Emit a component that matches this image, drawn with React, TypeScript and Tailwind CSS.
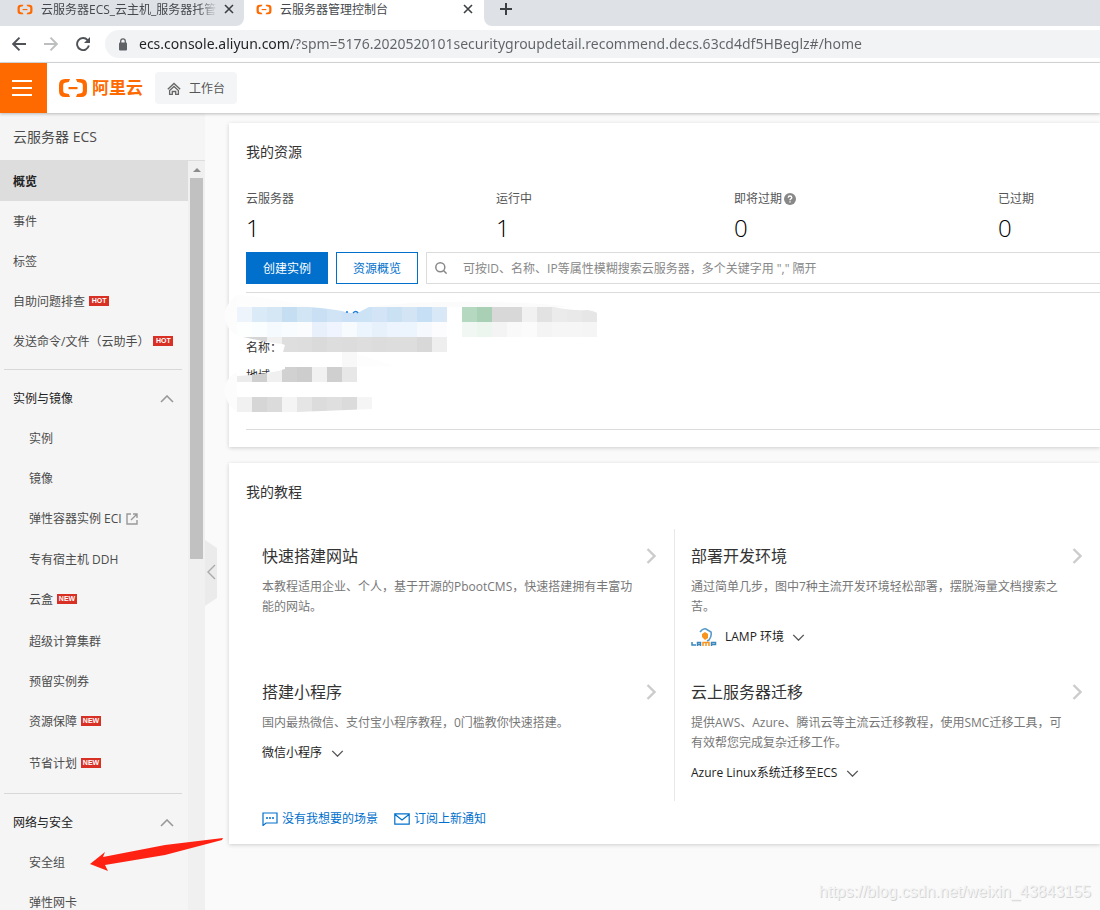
import type { ReactNode } from 'react';
import clsx from 'clsx';

interface NavItem {
  label: string;
  badge?: 'HOT' | 'NEW';
  external?: boolean;
  active?: boolean;
}

const TOP_ITEMS: NavItem[] = [
  { label: '概览', active: true },
  { label: '事件' },
  { label: '标签' },
  { label: '自助问题排查', badge: 'HOT' },
  { label: '发送命令/文件（云助手）', badge: 'HOT' },
];

const INSTANCE_ITEMS: NavItem[] = [
  { label: '实例' },
  { label: '镜像' },
  { label: '弹性容器实例 ECI', external: true },
  { label: '专有宿主机 DDH' },
  { label: '云盒', badge: 'NEW' },
  { label: '超级计算集群' },
  { label: '预留实例券' },
  { label: '资源保障', badge: 'NEW' },
  { label: '节省计划', badge: 'NEW' },
];

const NETWORK_ITEMS: NavItem[] = [{ label: '安全组' }, { label: '弹性网卡' }];

const STATS = [
  { label: '云服务器', value: 1 },
  { label: '运行中', value: 1 },
  { label: '即将过期', value: 0, help: true },
  { label: '已过期', value: 0 },
];

const CELL = 15;

// Mosaic rows that hide the instance details, in 15px cells
const MOSAIC: { x: number; y: number; colors: string[] }[] = [
  {
    x: 8,
    y: 14,
    colors: ['#edf4fc', '#dbeaf7', '#d5e6f5', '#c5def2', '#d2e5f5', '#c9e0f4', '#d1e4f5', '#cce1f5', '#cce2f5', '#d2e4f5', '#cae0f3', '#d3e5f5', '#c6dff4', '#d9e8f7'],
  },
  {
    x: 233,
    y: 14,
    colors: ['#b5d9c0', '#a9d0b5', '#d8d8d8', '#d8d8d8', '#f1f1f1', '#e2e2e2', '#ebebeb', '#e9e9e9', '#e6e6e6'],
  },
  {
    x: 8,
    y: 29,
    colors: ['#fdfffe', '#fafefe', '#f5fafe', '#f8fcfe', '#fafcfe', '#e8f1fb', '#eff4fe', '#f7fbfe', '#ecf4fd', '#e6f1fb', '#eef4fe', '#ecf5fd', '#f5f9fe', '#fcfcfe'],
  },
  {
    x: 233,
    y: 29,
    colors: ['#f1f7f3', '#edf5ef', '#f4f4f4', '#f9f9f9', '#fbfbfb', '#f4f4f4', '#f6f6f6', '#f6f6f6', '#f5f5f5'],
  },
  {
    x: 53,
    y: 44,
    colors: ['#dedede', '#dddddd', '#dadada', '#dddddd', '#dcdcdc', '#dedede', '#dcdcdc', '#dddddd', '#dddddd', '#d8d8d8', '#eeeeee'],
  },
  { x: 113, y: 59, colors: ['#f8f8f8'] },
  { x: 53, y: 74, colors: ['#d1d1d1', '#cdcdcd', '#f1f1f1', '#cfcfcf', '#e7e7e7'] },
  {
    x: 8,
    y: 104,
    colors: ['#f1f1f1', '#d6d6d6', '#dbdbdb', '#f4f4f4', '#e5e5e5', '#dcdcdc', '#dfdfdf', '#dbdbdb', '#f5f5f5'],
  },
];

function AliyunMark({ className }: { className?: string }) {
  return (
    <svg viewBox="0 0 30 20" className={className} fill="#ff6a00" aria-hidden="true">
      <path d="M12 1H7Q1 1 1 7V13Q1 19 7 19H12L10.800 16L7 15.200Q5.200 14.700 5.200 13V7Q5.200 5.300 7 4.800L10.800 4Z" />
      <path d="M18 1H23Q29 1 29 7V13Q29 19 23 19H18L19.200 16L23 15.200Q24.800 14.700 24.800 13V7Q24.800 5.300 23 4.800L19.200 4Z" />
      <path d="M10.500 9H19.500V11.200H10.500Z" />
    </svg>
  );
}

function Chevron({ dir, className }: { dir: 'up' | 'down' | 'left' | 'right'; className?: string }) {
  const paths = {
    up: 'M1 7L7 1L13 7',
    down: 'M1 1L7 7L13 1',
    left: 'M8 1L1 8L8 15',
    right: 'M1 1L8 8L1 15',
  };
  const vertical = dir === 'up' || dir === 'down';
  return (
    <svg
      viewBox={vertical ? '0 0 14 8' : '0 0 9 16'}
      className={clsx('shrink-0', className)}
      fill="none"
      stroke="currentColor"
      strokeWidth={vertical ? 1.6 : 2.4}
      aria-hidden="true"
    >
      <path d={paths[dir]} />
    </svg>
  );
}

function CloseIcon() {
  return (
    <svg viewBox="0 0 10 10" className="h-[10px] w-[10px]" stroke="#3c4043" strokeWidth="1.600" aria-hidden="true">
      <path d="M1 1L9 9M9 1L1 9" />
    </svg>
  );
}

function BrowserChrome() {
  return (
    <header className="shrink-0">
      <div role="tablist" className="flex h-[26px] bg-[#dee1e6] text-xs text-[#45494d]">
        <div className="w-[244px] bg-white">
          <div
            role="tab"
            aria-selected="false"
            className="flex h-[26px] items-start rounded-br-lg bg-[#dee1e6] pr-[10px] pl-[17px]"
          >
            <AliyunMark className="mt-1 mr-2 h-[11px] w-4 shrink-0" />
            <span className="w-[176px] overflow-hidden leading-5 whitespace-nowrap [mask-image:linear-gradient(to_right,black_158px,transparent)]">
              云服务器ECS_云主机_服务器托管
            </span>
            <button type="button" aria-label="关闭标签页" className="mt-1 ml-auto">
              <CloseIcon />
            </button>
          </div>
        </div>
        <div role="tab" aria-selected="true" className="flex w-[240px] items-start bg-white pr-[11px] pl-3">
          <AliyunMark className="mt-1 mr-2 h-[11px] w-4 shrink-0" />
          <span className="leading-5 whitespace-nowrap">云服务器管理控制台</span>
          <button type="button" aria-label="关闭标签页" className="mt-1 ml-auto">
            <CloseIcon />
          </button>
        </div>
        <div className="flex-1 bg-white">
          <div className="h-[26px] rounded-bl-lg bg-[#dee1e6] pt-[3px] pl-4">
            <button type="button" aria-label="新标签页" className="block">
              <svg viewBox="0 0 12 12" className="h-3 w-3" stroke="#3c4043" strokeWidth="2" aria-hidden="true">
                <path d="M6 0V12M0 6H12" />
              </svg>
            </button>
          </div>
        </div>
      </div>

      <div className="flex h-[37px] items-center border-b border-[#d9dbdd] bg-white pl-3">
        <button type="button" aria-label="后退" className="mr-[18px]">
          <svg viewBox="0 0 14 14" className="h-[14px] w-[14px]" fill="none" stroke="#4f5358" strokeWidth="1.900" aria-hidden="true">
            <path d="M14 7H1.500M7.500 0.700L1.200 7L7.500 13.300" />
          </svg>
        </button>
        <button type="button" aria-label="前进" className="mr-[18px]" disabled>
          <svg viewBox="0 0 14 14" className="h-[14px] w-[14px]" fill="none" stroke="#bcbec0" strokeWidth="1.900" aria-hidden="true">
            <path d="M0 7H12.500M6.500 0.700L12.800 7L6.500 13.300" />
          </svg>
        </button>
        <button type="button" aria-label="重新加载" className="mr-[15px]">
          <svg viewBox="0 0 14 14" className="h-[14px] w-[14px]" aria-hidden="true">
            <path d="M11.600 3.100A6 6 0 1 0 12.900 8.600" fill="none" stroke="#4f5358" strokeWidth="1.900" />
            <path d="M14 0V6H8Z" fill="#4f5358" />
          </svg>
        </button>
        <div className="flex h-7 flex-1 items-center rounded-l-full bg-[#f1f3f4] pl-[13px]">
          <svg viewBox="0 0 10 13" className="mr-[11px] h-[13px] w-[10px] shrink-0" aria-hidden="true">
            <rect x="1" y="4.500" width="8" height="8" rx="1" fill="#5f6368" />
            <path d="M2.700 5V3.200A2.300 2.300 0 0 1 7.300 3.200V5" fill="none" stroke="#5f6368" strokeWidth="1.300" />
          </svg>
          <input
            type="text"
            aria-label="地址栏"
            className="min-w-0 flex-1 bg-[linear-gradient(to_right,#202124_153px,#5f6368_153px)] bg-clip-text font-['Noto_Sans',sans-serif] text-sm leading-5 text-transparent outline-none"
            defaultValue="ecs.console.aliyun.com/?spm=5176.2020520101securitygroupdetail.recommend.decs.63cd4df5HBeglz#/home"
          />
        </div>
      </div>
    </header>
  );
}

function ConsoleHeader() {
  return (
    <div className="relative z-10 flex h-[50px] shrink-0 items-center bg-white shadow-[0_1px_3px_rgba(0,0,0,0.25)]">
      <button type="button" aria-label="菜单" className="flex h-full w-[47px] items-center bg-[#ff6a00] pl-3">
        <svg viewBox="0 0 20 16" className="h-4 w-5" stroke="#fff" strokeWidth="2" aria-hidden="true">
          <path d="M0 1H20M0 8H20M0 15H20" />
        </svg>
      </button>
      <a href="#home" className="ml-[11px] flex items-center text-[17px] leading-6 font-bold text-[#ff6a00]">
        <AliyunMark className="mr-1 h-5 w-[30px]" />
        阿里云
      </a>
      <a href="#workbench" className="ml-3 flex h-8 items-center rounded-sm bg-[#f4f5f6] px-3 pt-[2px] text-xs text-[#555]">
        <svg viewBox="0 0 14 14" className="mr-2 h-[14px] w-[14px]" fill="none" stroke="#666" strokeWidth="1.300" aria-hidden="true">
          <path d="M0.800 7.200L7 1.500L13.200 7.200M2.600 8.500L7 4.500L11.400 8.500V12.400H8.700V9.500H5.300V12.400H2.600Z" />
        </svg>
        工作台
      </a>
    </div>
  );
}

function Badge({ text }: { text: string }) {
  return (
    <span className="mb-[3px] flex h-[10px] w-5 items-center justify-center bg-[#d93026] font-['Liberation_Sans',sans-serif] text-[7px] leading-none font-bold text-white">
      {text}
    </span>
  );
}

function NavLink({ item, nested }: { item: NavItem; nested?: boolean }) {
  return (
    <li
      className={clsx(
        item.active && 'bg-[#ddd] font-bold text-[#222]',
        item.external && 'pb-px',
        nested && item.badge && 'pb-[2px]'
      )}
    >
      <a
        href="#nav"
        className={clsx('flex h-10 items-center gap-1 pt-[2px] whitespace-nowrap', nested ? 'pl-[29px]' : 'pl-[13px]')}
      >
        {item.label}
        {item.badge && <Badge text={item.badge} />}
        {item.external && (
          <svg viewBox="0 0 12 12" className="h-3 w-3" fill="none" stroke="#999" strokeWidth="1.400" aria-hidden="true">
            <path d="M5 1H1V11H11V7M7 1H11V5M11 1L5 7" />
          </svg>
        )}
      </a>
    </li>
  );
}

function NavSection({ title, items }: { title: string; items: NavItem[] }) {
  return (
    <section>
      <hr className="mt-2 mr-[6px] mb-2 ml-1 border-t border-[#d8d8d8]" />
      <button type="button" className="flex h-10 w-full items-center justify-between pt-[2px] pr-[14px] pl-[13px] text-[#222]">
        {title}
        <Chevron dir="up" className="h-2 w-[14px] text-[#999]" />
      </button>
      <ul>
        {items.map(item => (
          <NavLink key={item.label} item={item} nested />
        ))}
      </ul>
    </section>
  );
}

function Sidebar() {
  return (
    <aside className="relative flex w-[205px] shrink-0 flex-col bg-[#f5f5f5] text-xs text-[#4c4c4c]">
      <h1 className="h-12 shrink-0 border-b border-[#ddd] pl-[13px] text-sm leading-[48px]">云服务器 ECS</h1>
      <div className="flex min-h-0 flex-1">
        <nav className="flex-1 overflow-hidden">
          <ul>
            {TOP_ITEMS.map(item => (
              <NavLink key={item.label} item={item} />
            ))}
          </ul>
          <NavSection title="实例与镜像" items={INSTANCE_ITEMS} />
          <NavSection title="网络与安全" items={NETWORK_ITEMS} />
        </nav>
        {/* Scroll track */}
        <div className="w-[17px] bg-[#f0f0f0] px-[2px]">
          <div className="flex h-[17px] items-center justify-center">
            <svg viewBox="0 0 8 4" className="h-1 w-2" fill="#8c8c8c" aria-hidden="true">
              <path d="M4 0L8 4H0Z" />
            </svg>
          </div>
          <div className="h-[381px] bg-[#c1c1c1]" />
        </div>
      </div>

      {/* Collapse handle */}
      <button type="button" aria-label="收起导航" className="absolute top-[427px] left-full h-[66px] w-3">
        <svg viewBox="0 0 12 66" className="h-full w-full" aria-hidden="true">
          <path d="M0 0L12 8V58L0 66Z" fill="#ebebeb" />
          <path d="M10 25L3 32L10 39" fill="none" stroke="#aaa" strokeWidth="1.400" />
        </svg>
      </button>
    </aside>
  );
}

function Card({ title, children }: { title: string; children: ReactNode }) {
  return (
    <section className="bg-white pt-[19px] pl-[17px] shadow-[0_1px_4px_rgba(0,0,0,0.18)]">
      <h2 className="text-sm leading-5 text-[#333]">{title}</h2>
      {children}
    </section>
  );
}

function InstanceSummary() {
  return (
    <div className="relative h-[138px] border-y border-[#dcdcdc] pt-[45px] text-xs leading-5 text-[#333]">
      <p>名称：</p>
      <p className="mt-2">地域</p>
      <svg viewBox="0 0 400 136" className="absolute top-0 -left-[17px] h-[136px] w-[400px] overflow-visible" aria-hidden="true">
        <path d="M8 2Q-3 10 -5 22Q-3 37 8 42Z" fill="#fcfcfc" />
        <path d="M8 79Q-3 84 -5 97Q-3 112 8 119Z" fill="#fcfcfc" />
        {MOSAIC.map(row =>
          row.colors.map((color, i) => (
            <rect key={`${row.x}-${row.y}-${i}`} x={row.x + i * CELL} y={row.y} width={CELL} height={CELL} fill={color} />
          ))
        )}
        <path d="M14 44H38V49Z" fill="#d5d5d5" />
        <path d="M38 44H53V51L38 49Z" fill="#f1f1f1" />
        <path d="M53 51L56 52L54 59H53Z" fill="#fff" />
        <path d="M8 83L23 82V89H8Z" fill="#ececec" />
        <path d="M23 82L38 80V89H23Z" fill="#cfcfcf" />
        <path d="M38 80L53 77V89H38Z" fill="#f0f0f0" />
        <path d="M44 74H56V76L44 79Z" fill="#fff" />
        <path d="M8 8L80 14Q105 16 117 19Q128 22 134 17L142 13H8Z" fill="#fff" />
        <path d="M8 2Q40 4 80 14H8Z" fill="#fdfdfd" />
        <path d="M142 14Q180 8 260 9Q320 10 340 14H142Z" fill="#fbfbfb" />
        <path d="M325 14Q345 18 358 17Q365 18 368 20V13Z" fill="#fff" />
        <path d="M68 119L143 116V120H68Z" fill="#fff" />
        <path d="M128 61L166 73H128Z" fill="#fdfdfd" />
        <path d="M118 18V20M124 20Q127 17 129 20" fill="none" stroke="#1b7fd6" strokeWidth="1.500" />
      </svg>
    </div>
  );
}

function Resources() {
  return (
    <Card title="我的资源">
      <dl className="mt-[27px] grid grid-cols-[250fr_238fr_264fr_102fr]">
        {STATS.map(stat => (
          <div key={stat.label}>
            <dt className="flex items-center gap-[2px] text-xs leading-5 text-[#555]">
              {stat.label}
              {stat.help && (
                <svg viewBox="0 0 12 12" className="mb-px h-3 w-3" aria-hidden="true">
                  <circle cx="6" cy="6" r="6" fill="#888" />
                  <path d="M4.200 4.700Q4.300 3 6 3T7.800 4.600Q7.800 5.400 6.900 5.900Q6 6.400 6 7.200M6 8.300V9.500" fill="none" stroke="#fff" strokeWidth="1.300" />
                </svg>
              )}
            </dt>
            <dd className="mt-[5px] text-2xl leading-7 font-light text-black">{stat.value}</dd>
          </div>
        ))}
      </dl>
      <div className="mt-[10px] mb-2 flex gap-2 text-xs">
        <button type="button" className="h-8 w-[82px] bg-[#0070cc] pt-px text-white">
          创建实例
        </button>
        <button type="button" className="h-8 w-[82px] border border-[#0070cc] bg-white pt-px text-[#0070cc]">
          资源概览
        </button>
        <label className="flex h-8 flex-1 items-center border border-r-0 border-[#dcdcdc] pl-2">
          <svg viewBox="0 0 12 12" className="mr-4 h-3 w-3 shrink-0" fill="none" stroke="#888" strokeWidth="1.500" aria-hidden="true">
            <circle cx="5.300" cy="5.300" r="4.500" />
            <path d="M8.500 8.500L11.600 11.600" />
          </svg>
          <input
            type="search"
            aria-label="搜索云服务器"
            placeholder={'可按ID、名称、IP等属性模糊搜索云服务器，多个关键字用 "," 隔开'}
            className="min-w-0 flex-1 pt-[2px] outline-none placeholder:text-[#888]"
          />
        </label>
      </div>
      <InstanceSummary />
      <div className="h-[17px]" />
    </Card>
  );
}

function LampLogo() {
  return (
    <svg viewBox="0 0 26 18" className="mr-2 h-[18px] w-[26px]" fill="none" aria-hidden="true">
      <path d="M9 4Q12 0 15 1L20 4Q21 8 18 12L16 13" stroke="#5b9bc8" strokeWidth="1.600" />
      <path d="M11 6L14 4L17 6L17 10L14 12L11 9Z" fill="#f7941d" />
      <path d="M1 14V17H5M6.500 18V14.500H9.500V18M6.500 16.500H9.500" stroke="#3b86bd" strokeWidth="1.500" />
      <path d="M12 18V14.500H18V18M15 14.500V18" stroke="#f7941d" strokeWidth="1.500" />
      <path d="M20.500 18V14.500H24.500V16.500H20.500" stroke="#3b86bd" strokeWidth="1.500" />
    </svg>
  );
}

interface TutorialProps {
  title: string;
  option?: string;
  logo?: ReactNode;
  children: ReactNode;
}

function Tutorial({ title, option, logo, children }: TutorialProps) {
  return (
    <article className="px-4 pt-[15px] pb-[18px]">
      <a href="#tutorial" className="flex items-center justify-between text-base leading-6 text-[#333]">
        {title}
        <Chevron dir="right" className="mr-[2px] h-4 w-[10px] text-[#ccc]" />
      </a>
      <p className="mt-[9px] text-xs leading-5 text-[#777]">{children}</p>
      {option && (
        <div className="mt-[10px] flex h-5 items-center">
          {logo}
          <select aria-label={title} className="appearance-none bg-transparent text-xs leading-5 text-[#222] outline-none">
            <option>{option}</option>
          </select>
          <Chevron dir="down" className="ml-2 h-[7px] w-[13px] text-[#555]" />
        </div>
      )}
    </article>
  );
}

function Tutorials() {
  return (
    <Card title="我的教程">
      <div className="mt-[27px] grid grid-cols-[429fr_425fr]">
        <div className="grid grid-rows-2 border-r border-[#e8e8e8]">
          <Tutorial title="快速搭建网站">
            本教程适用企业、个人，基于开源的PbootCMS，快速搭建拥有丰富功
            <br />
            能的网站。
          </Tutorial>
          <Tutorial title="搭建小程序" option="微信小程序">
            国内最热微信、支付宝小程序教程，0门槛教你快速搭建。
          </Tutorial>
        </div>
        <div className="grid grid-rows-2">
          <Tutorial title="部署开发环境" option="LAMP 环境" logo={<LampLogo />}>
            通过简单几步，图中7种主流开发环境轻松部署，摆脱海量文档搜索之
            <br />
            苦。
          </Tutorial>
          <Tutorial title="云上服务器迁移" option="Azure Linux系统迁移至ECS">
            提供AWS、Azure、腾讯云等主流云迁移教程，使用SMC迁移工具，可
            <br />
            有效帮您完成复杂迁移工作。
          </Tutorial>
        </div>
      </div>
      <div className="mt-2 flex gap-4 pb-[15px] pl-4 text-xs leading-5 text-[#0070cc]">
        <a href="#feedback" className="flex items-center gap-1">
          <svg viewBox="0 0 16 14" className="h-[14px] w-4" fill="none" stroke="currentColor" strokeWidth="1.200" aria-hidden="true">
            <path d="M1 1H15V11H4L1 13.500Z" />
            <path d="M4 6H6M7 6H9M10 6H12" strokeWidth="1.500" />
          </svg>
          没有我想要的场景
        </a>
        <a href="#subscribe" className="flex items-center gap-1">
          <svg viewBox="0 0 16 12" className="h-3 w-4" fill="none" stroke="currentColor" strokeWidth="1.200" aria-hidden="true">
            <path d="M0.800 0.800H15.200V11.200H0.800ZM1 1.500L8 7L15 1.500" />
          </svg>
          订阅上新通知
        </a>
      </div>
    </Card>
  );
}

export default function App() {
  return (
    <div className="relative flex h-screen flex-col overflow-hidden bg-[#fafafa] font-['Open_Sans','Noto_Sans_CJK_SC',sans-serif]">
      <BrowserChrome />
      <ConsoleHeader />
      <div className="flex min-h-0 flex-1">
        <Sidebar />
        <main className="flex min-w-0 flex-1 flex-col gap-4 pt-[10px] pl-6">
          <Resources />
          <Tutorials />
        </main>
      </div>

      {/* Pointer to the security group entry */}
      <svg viewBox="0 0 134 35" className="pointer-events-none absolute top-[837px] left-[90px] h-[35px] w-[134px]" aria-hidden="true">
        <path d="M0 27L15 15L13 20L75 8L133 1L132 3L75 18L15 28L18 34Z" fill="#ff2213" />
      </svg>
      <p className="pointer-events-none absolute right-[9px] bottom-2 font-['Liberation_Sans',sans-serif] text-base leading-5 text-[#f4f4f4] [text-shadow:1px_1px_0_#d4d4d4]">
        https://blog.csdn.net/weixin_43843155
      </p>
    </div>
  );
}
